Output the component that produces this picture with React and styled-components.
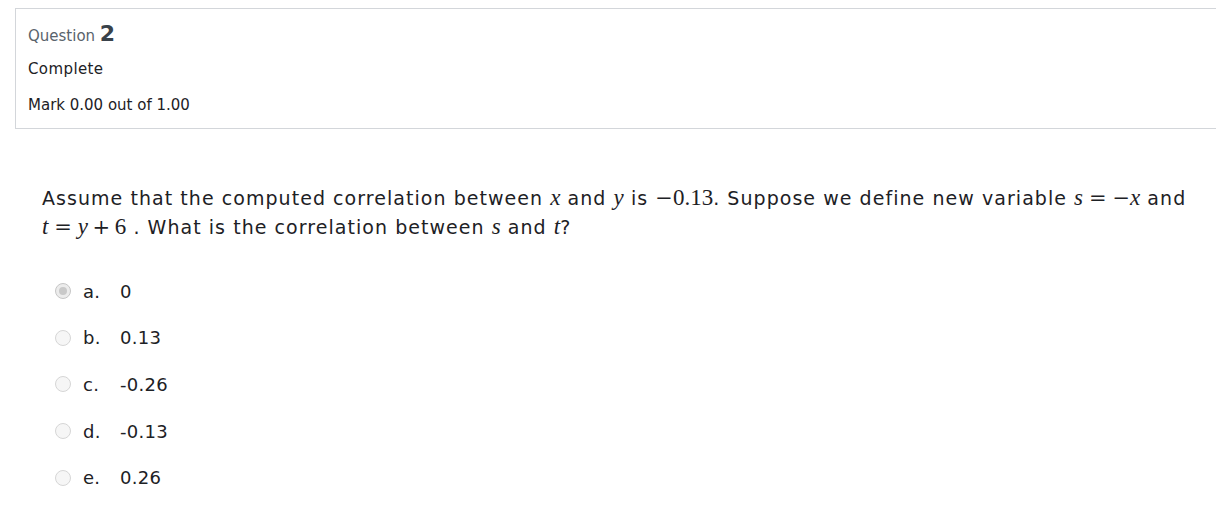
import React from 'react';
import styled, { createGlobalStyle } from 'styled-components';

const GlobalStyle = createGlobalStyle`
    body {
        margin: 0;
        background: #fff;
        font-family: "DejaVu Sans", Verdana, sans-serif;
        color: #1d2125;
        overflow: hidden;
    }
`;

/*
    ~~Styles~~
*/
const Page = styled.div`
    padding-top: 8px;
    width: 1216px;
    overflow: hidden;
`;

const Info = styled.div`
    margin-left: 15px;
    width: 1300px;
    height: 121px;
    box-sizing: border-box;
    border: 1px solid #d3d6da;
    padding: 14px 12px 0;
    display: flex;
    flex-direction: column;
`;

const QNo = styled.h3`
    margin: 0;
    font-size: 15px;
    font-weight: 400;
    color: #59636c;
    line-height: 22px;
    span {
        font-size: 22px;
        font-weight: 700;
        color: #39424a;
    }
`;

const State = styled.div`
    font-size: 15px;
    line-height: 20px;
    letter-spacing: 0.4px;
    margin-top: 12px;
`;

const Grade = styled.div`
    font-size: 15px;
    line-height: 20px;
    margin-top: 16px;
`;

const Text = styled.p`
    margin: 55px 0 0 42px;
    font-size: 19px;
    letter-spacing: 1.05px;
    line-height: 29px;
    width: 1165px;
    color: #1d2125;
`;

const Math = styled.span`
    font-family: "Liberation Serif", "Times New Roman", serif;
    font-size: 23px;
    line-height: 20px;
    letter-spacing: 0;
    white-space: nowrap;
`;

const V = styled.i`
    font-style: italic;
`;

const Op = styled.span`
    font-family: "DejaVu Serif", serif;
    font-size: 21px;
    margin: 0 ${(p) => (p.$rel ? '0.28em' : p.$bin ? '0.22em' : '0')};
`;

const Answers = styled.div`
    margin: 26px 0 0 55px;
    display: flex;
    flex-direction: column;
`;

const Option = styled.label`
    display: flex;
    align-items: center;
    height: 46.6px;
    font-size: 18px;
    letter-spacing: 0.3px;
`;

const Radio = styled.span`
    width: 14px;
    height: 14px;
    border-radius: 50%;
    border: 1px solid ${(p) => (p.$on ? '#c6c6c6' : '#d6d6d6')};
    background: ${(p) => (p.$on ? '#ececec' : '#f6f6f6')};
    display: flex;
    align-items: center;
    justify-content: center;
    margin-right: 12px;
    &::after {
        content: '';
        width: 8px;
        height: 8px;
        border-radius: 50%;
        background: ${(p) => (p.$on ? '#c9c9c9' : 'transparent')};
    }
`;

const Letter = styled.span`
    width: 37px;
`;
/* ------------------------------- */

const answers = [
    { l: 'a.', v: '0', on: true },
    { l: 'b.', v: '0.13' },
    { l: 'c.', v: '-0.26' },
    { l: 'd.', v: '-0.13' },
    { l: 'e.', v: '0.26' },
];

const App = () => {
    return (
        <Page>
            <GlobalStyle />
            <Info>
                <QNo>Question <span>2</span></QNo>
                <State>Complete</State>
                <Grade>Mark 0.00 out of 1.00</Grade>
            </Info>
            <Text>
                Assume that the computed correlation between <Math><V>x</V></Math> and{' '}
                <Math><V>y</V></Math> is <Math><Op>−</Op>0.13</Math>. Suppose we define new variable{' '}
                <Math><V>s</V><Op $rel>=</Op><Op>−</Op><V>x</V></Math>{'  '}and{' '}
                <Math><V>t</V><Op $rel>=</Op><V>y</V><Op $bin>+</Op>6</Math> . What is the
                correlation between <Math><V>s</V></Math> and <Math><V>t</V></Math>?
            </Text>
            <Answers>
                {answers.map((a) => (
                    <Option key={a.l}>
                        <Radio $on={a.on} />
                        <Letter>{a.l}</Letter>
                        {a.v}
                    </Option>
                ))}
            </Answers>
        </Page>
    );
};

export default App;
